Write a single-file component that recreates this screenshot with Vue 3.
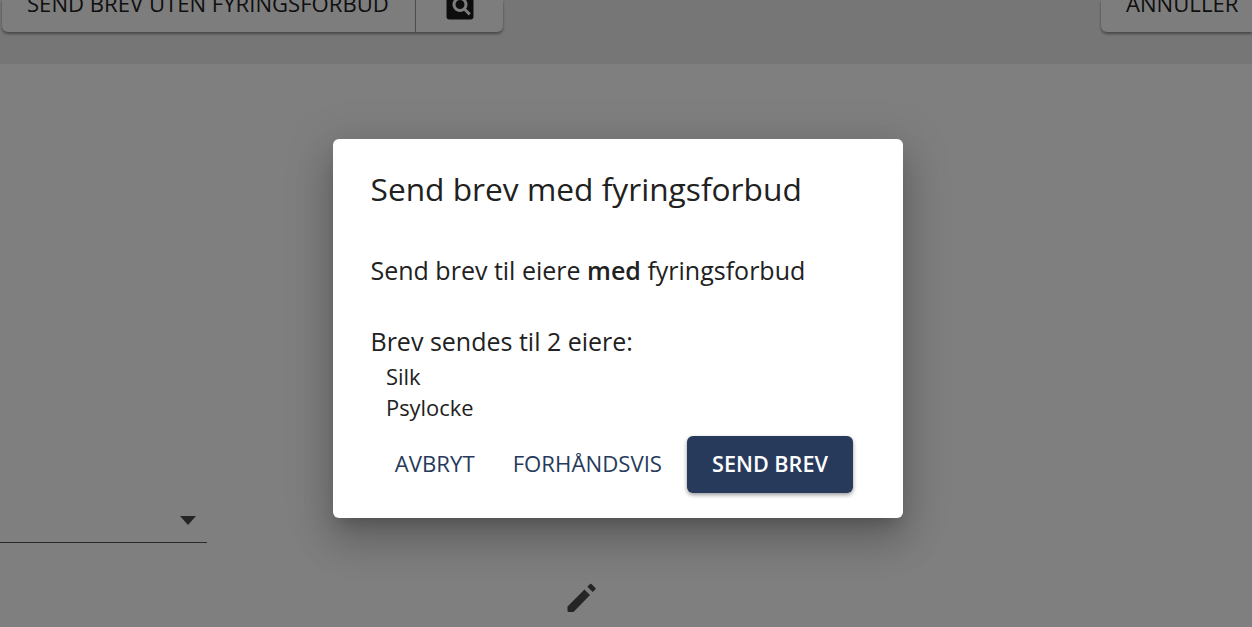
<template>
  <div class="page">
    <div class="toolbar">
      <div class="btn-group">
        <div class="tool-btn main-btn">SEND BREV UTEN FYRINGSFORBUD</div>
        <div class="tool-btn search-btn">
          <!-- pageview -->
          <svg width="36" height="36" viewBox="0 0 24 24">
            <path fill="#1a1a1a" fill-rule="evenodd" d="M5 3h14a2 2 0 0 1 2 2v14a2 2 0 0 1-2 2H5a2 2 0 0 1-2-2V5a2 2 0 0 1 2-2zM12 6a5 5 0 1 0 2.7 9.2l3.1 3.1 1.4-1.4-3.1-3.1A5 5 0 0 0 12 6zM12 8a3 3 0 1 1 0 6 3 3 0 0 1 0-6z"/>
          </svg>
        </div>
      </div>
      <div class="tool-btn cancel-btn">ANNULLER</div>
    </div>

    <div class="content">
      <div class="select-line">
        <span class="arrow"></span>
      </div>
      <svg class="pencil" width="34" height="34" viewBox="0 0 34 34">
        <path fill="#4a4a4a" d="M3.5 25.5 20.5 8.5l5.5 5.5L9.5 31H4.5a1 1 0 0 1-1-1zM23.3 5.7 26 3a1 1 0 0 1 1.4 0l4 4a1 1 0 0 1 0 1.4l-2.7 2.7z"/>
      </svg>
    </div>

    <div class="overlay">
      <div class="dialog">
        <h2 class="title">Send brev med fyringsforbud</h2>
        <p class="lead">Send brev til eiere <strong>med</strong> fyringsforbud</p>
        <p class="count">Brev sendes til {{ owners.length }} eiere:</p>
        <div class="owners">
          <div v-for="owner in owners" :key="owner">{{ owner }}</div>
        </div>
        <div class="actions">
          <button class="text-btn">AVBRYT</button>
          <button class="text-btn">FORHÅNDSVIS</button>
          <button class="send-btn">SEND BREV</button>
        </div>
      </div>
    </div>
  </div>
</template>

<script setup>
const owners = ['Silk', 'Psylocke']
</script>

<style>
html, body {
  margin: 0;
  overflow: hidden;
}
</style>

<style scoped>
.page {
  position: relative;
  width: 1252px;
  height: 627px;
  overflow: hidden;
  background: #fff;
  font-family: "Open Sans", "Noto Sans", sans-serif;
  color: #212121;
}

.toolbar {
  height: 64px;
  box-sizing: border-box;
  background: #ededed;
  display: flex;
  justify-content: space-between;
  padding-left: 2px;
}

.btn-group {
  display: flex;
  height: 32px;
  background: #fafafa;
  border-radius: 0 0 6px 6px;
  box-shadow: 0 2px 3px rgba(0, 0, 0, 0.4);
}

.tool-btn {
  display: flex;
  align-items: flex-end;
  font-size: 22.1px;
  line-height: 30px;
  color: #212121;
  white-space: nowrap;
}

.main-btn {
  width: 414px;
  box-sizing: border-box;
  height: 32px;
  padding: 0 0 14px 25px;
  border-right: 1px solid #999;
}

.search-btn {
  width: 87px;
  height: 32px;
  justify-content: center;
  align-items: flex-end;
  padding-bottom: 8px;
  box-sizing: border-box;
}

.cancel-btn {
  height: 32px;
  width: 151px;
  box-sizing: border-box;
  padding: 0 0 14px 25px;
  background: #fafafa;
  border-radius: 0 0 0 6px;
  box-shadow: 0 2px 3px rgba(0, 0, 0, 0.4);
}

.content {
  position: relative;
  height: 563px;
}

.select-line {
  position: absolute;
  left: 0;
  top: 478px;
  width: 207px;
  height: 1px;
  background: #555;
}

.arrow {
  position: absolute;
  left: 180px;
  top: -26px;
  border-left: 8px solid transparent;
  border-right: 8px solid transparent;
  border-top: 9px solid #4a4a4a;
}

.pencil {
  position: absolute;
  left: 564px;
  top: 517px;
}

.overlay {
  position: absolute;
  inset: 0;
  background: rgba(0, 0, 0, 0.5);
}

.dialog {
  position: absolute;
  left: 333px;
  top: 139px;
  width: 570px;
  height: 379px;
  box-sizing: border-box;
  padding: 31px 38px 0 37.5px;
  background: #fff;
  border-radius: 6px;
  box-shadow: 0 11px 15px -7px rgba(0, 0, 0, 0.2), 0 24px 38px 3px rgba(0, 0, 0, 0.14), 0 9px 46px 8px rgba(0, 0, 0, 0.12);
}

.title {
  margin: 0;
  font-size: 31.7px;
  line-height: 38px;
  font-weight: 400;
}

.lead {
  margin: 46px 0 0;
  font-size: 25px;
  line-height: 32px;
}

.lead strong {
  font-weight: 600;
}

.count {
  margin: 39px 0 0;
  font-size: 25px;
  line-height: 32px;
}

.owners {
  margin: 4px 0 0 15.5px;
  font-size: 21.9px;
  line-height: 31px;
}

.actions {
  display: flex;
  justify-content: flex-end;
  align-items: center;
  margin: 13px 12px 0 0;
}

.text-btn,
.send-btn {
  font-family: inherit;
  font-size: 22.2px;
  border: none;
  height: 57px;
  padding-bottom: 4px;
  border-radius: 6px;
  cursor: pointer;
}

.text-btn {
  background: transparent;
  color: #273a5c;
  padding-left: 13px;
  padding-right: 25px;
}

.send-btn {
  background: #273a5c;
  color: #fff;
  font-size: 21.6px;
  font-weight: 600;
  width: 166px;
  box-shadow: 0 2px 4px rgba(0, 0, 0, 0.4);
}
</style>
